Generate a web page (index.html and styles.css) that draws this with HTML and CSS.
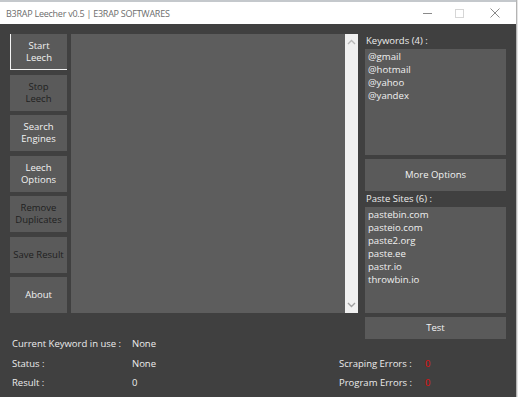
FILE: index.html
```html
<!DOCTYPE html>
<html lang="en">

<head>
    <meta charset="UTF-8">
    <meta name="viewport" content="width=device-width, initial-scale=1.0">
    <title>B3RAP Leecher v0.5</title>
    <link rel="stylesheet" href="styles.css">
</head>

<body>
    <div class="window">
        <!-- Title bar -->
        <div class="titlebar">
            <span class="title">B3RAP Leecher v0.5 | E3RAP SOFTWARES</span>
            <div class="controls">
                <span class="ctl min"></span>
                <span class="ctl max"></span>
                <span class="ctl close">
                    <svg width="10" height="10" viewBox="0 0 10 10">
                        <path d="M0.5 0.5 L9.5 9.5 M9.5 0.5 L0.5 9.5" stroke="#8a8a8a" stroke-width="1" />
                    </svg>
                </span>
            </div>
        </div>

        <div class="content">
            <div class="top">
                <!-- Left side buttons -->
                <div class="sidebar">
                    <button class="btn focused">Start<br>Leech</button>
                    <button class="btn off">Stop<br>Leech</button>
                    <button class="btn">Search<br>Engines</button>
                    <button class="btn">Leech<br>Options</button>
                    <button class="btn off">Remove<br>Duplicates</button>
                    <button class="btn off">Save Result</button>
                    <button class="btn">About</button>
                </div>

                <!-- Log box -->
                <div class="log"></div>
                <div class="scrollbar">
                    <svg width="9" height="6" viewBox="0 0 9 6">
                        <path d="M1 5 L4.5 1.5 L8 5" fill="none" stroke="#b8b8b8" stroke-width="1.4" />
                    </svg>
                    <svg width="9" height="6" viewBox="0 0 9 6">
                        <path d="M1 1 L4.5 4.5 L8 1" fill="none" stroke="#a0a0a0" stroke-width="1.4" />
                    </svg>
                </div>

                <!-- Right side -->
                <div class="right">
                    <div class="label">Keywords (4) :</div>
                    <div class="list">
                        <div>@gmail</div>
                        <div>@hotmail</div>
                        <div>@yahoo</div>
                        <div>@yandex</div>
                    </div>
                    <button class="btn wide">More Options</button>
                    <div class="label">Paste Sites (6) :</div>
                    <div class="list">
                        <div>pastebin.com</div>
                        <div>pasteio.com</div>
                        <div>paste2.org</div>
                        <div>paste.ee</div>
                        <div>pastr.io</div>
                        <div>throwbin.io</div>
                    </div>
                    <button class="btn test">Test</button>
                </div>
            </div>

            <!-- Status -->
            <div class="status">
                <span>Current Keyword in use :</span>
                <span>None</span>
                <span></span>
                <span></span>

                <span>Status :</span>
                <span>None</span>
                <span>Scraping Errors :</span>
                <span class="err">0</span>

                <span>Result :</span>
                <span>0</span>
                <span>Program Errors :</span>
                <span class="err">0</span>
            </div>
        </div>
    </div>
</body>

</html>
```

FILE: styles.css
```css
body {
    margin: 0;
    background-color: #e4e4e4;
    font-family: "Open Sans", "Noto Sans", sans-serif;
    font-size: 9.5px;
    overflow: hidden;
}

.window {
    width: 516px;
    height: 397px;
    background-color: #404040;
    border-right: 1px solid #b4b4b4;
    display: flex;
    flex-direction: column;
}

.titlebar {
    height: 22px;
    background-color: white;
    border-top: 2px solid #c4c8cc;
    display: flex;
    align-items: center;
    justify-content: space-between;
}

.title {
    margin-left: 6px;
    color: #6d6d6d;
    font-size: 9px;
    letter-spacing: -0.25px;
}

.controls {
    display: flex;
    align-items: center;
    height: 100%;
}

.ctl {
    width: 35px;
    height: 100%;
    display: flex;
    align-items: center;
    justify-content: center;
}

.min::before {
    content: "";
    width: 9px;
    height: 1px;
    margin-left: 6px;
    background-color: #8a8a8a;
}

.max::before {
    content: "";
    width: 7px;
    height: 7px;
    border: 1px solid #d6d6d6;
}

.close {
    margin-right: 4px;
}

.content {
    padding: 10px 0 0 10px;
}

.top {
    display: flex;
}

.sidebar {
    width: 57px;
    display: flex;
    flex-direction: column;
    gap: 4.5px;
}

.btn {
    height: 36px;
    padding: 0;
    background-color: #5a5a5a;
    border: none;
    color: #f2f2f2;
    font-family: inherit;
    font-size: 9.5px;
    line-height: 12px;
}

.btn.off {
    color: #1f1f1f;
}

.btn.focused {
    border-left: 1px solid #f4f4f4;
    border-bottom: 1px solid #f4f4f4;
}

.log {
    width: 274px;
    height: 279px;
    margin-left: 4px;
    background-color: #5d5d5d;
}

.scrollbar {
    width: 13px;
    height: 279px;
    background-color: #f0f0f0;
    display: flex;
    flex-direction: column;
    align-items: center;
    justify-content: space-between;
    padding: 5px 0;
    box-sizing: border-box;
}

.right {
    width: 141px;
    margin-left: 7px;
    display: flex;
    flex-direction: column;
}

.label {
    height: 15px;
    line-height: 13px;
    padding-left: 1px;
    color: #ececec;
}

.list {
    height: 106px;
    background-color: #5a5a5a;
    padding: 1px 0 0 3px;
    box-sizing: border-box;
    color: #f0f0f0;
    font-size: 9.6px;
    line-height: 13px;
}

.btn.wide {
    height: 32px;
    margin: 4px 0 1px;
}

.btn.test {
    height: 22px;
    margin-top: 4px;
}

.status {
    display: grid;
    grid-template-columns: 120px 207px 86px auto;
    grid-auto-rows: 19.5px;
    align-items: center;
    margin-top: -5px;
    padding-left: 2px;
    color: #ececec;
}

.err {
    color: #e01010;
}
```
